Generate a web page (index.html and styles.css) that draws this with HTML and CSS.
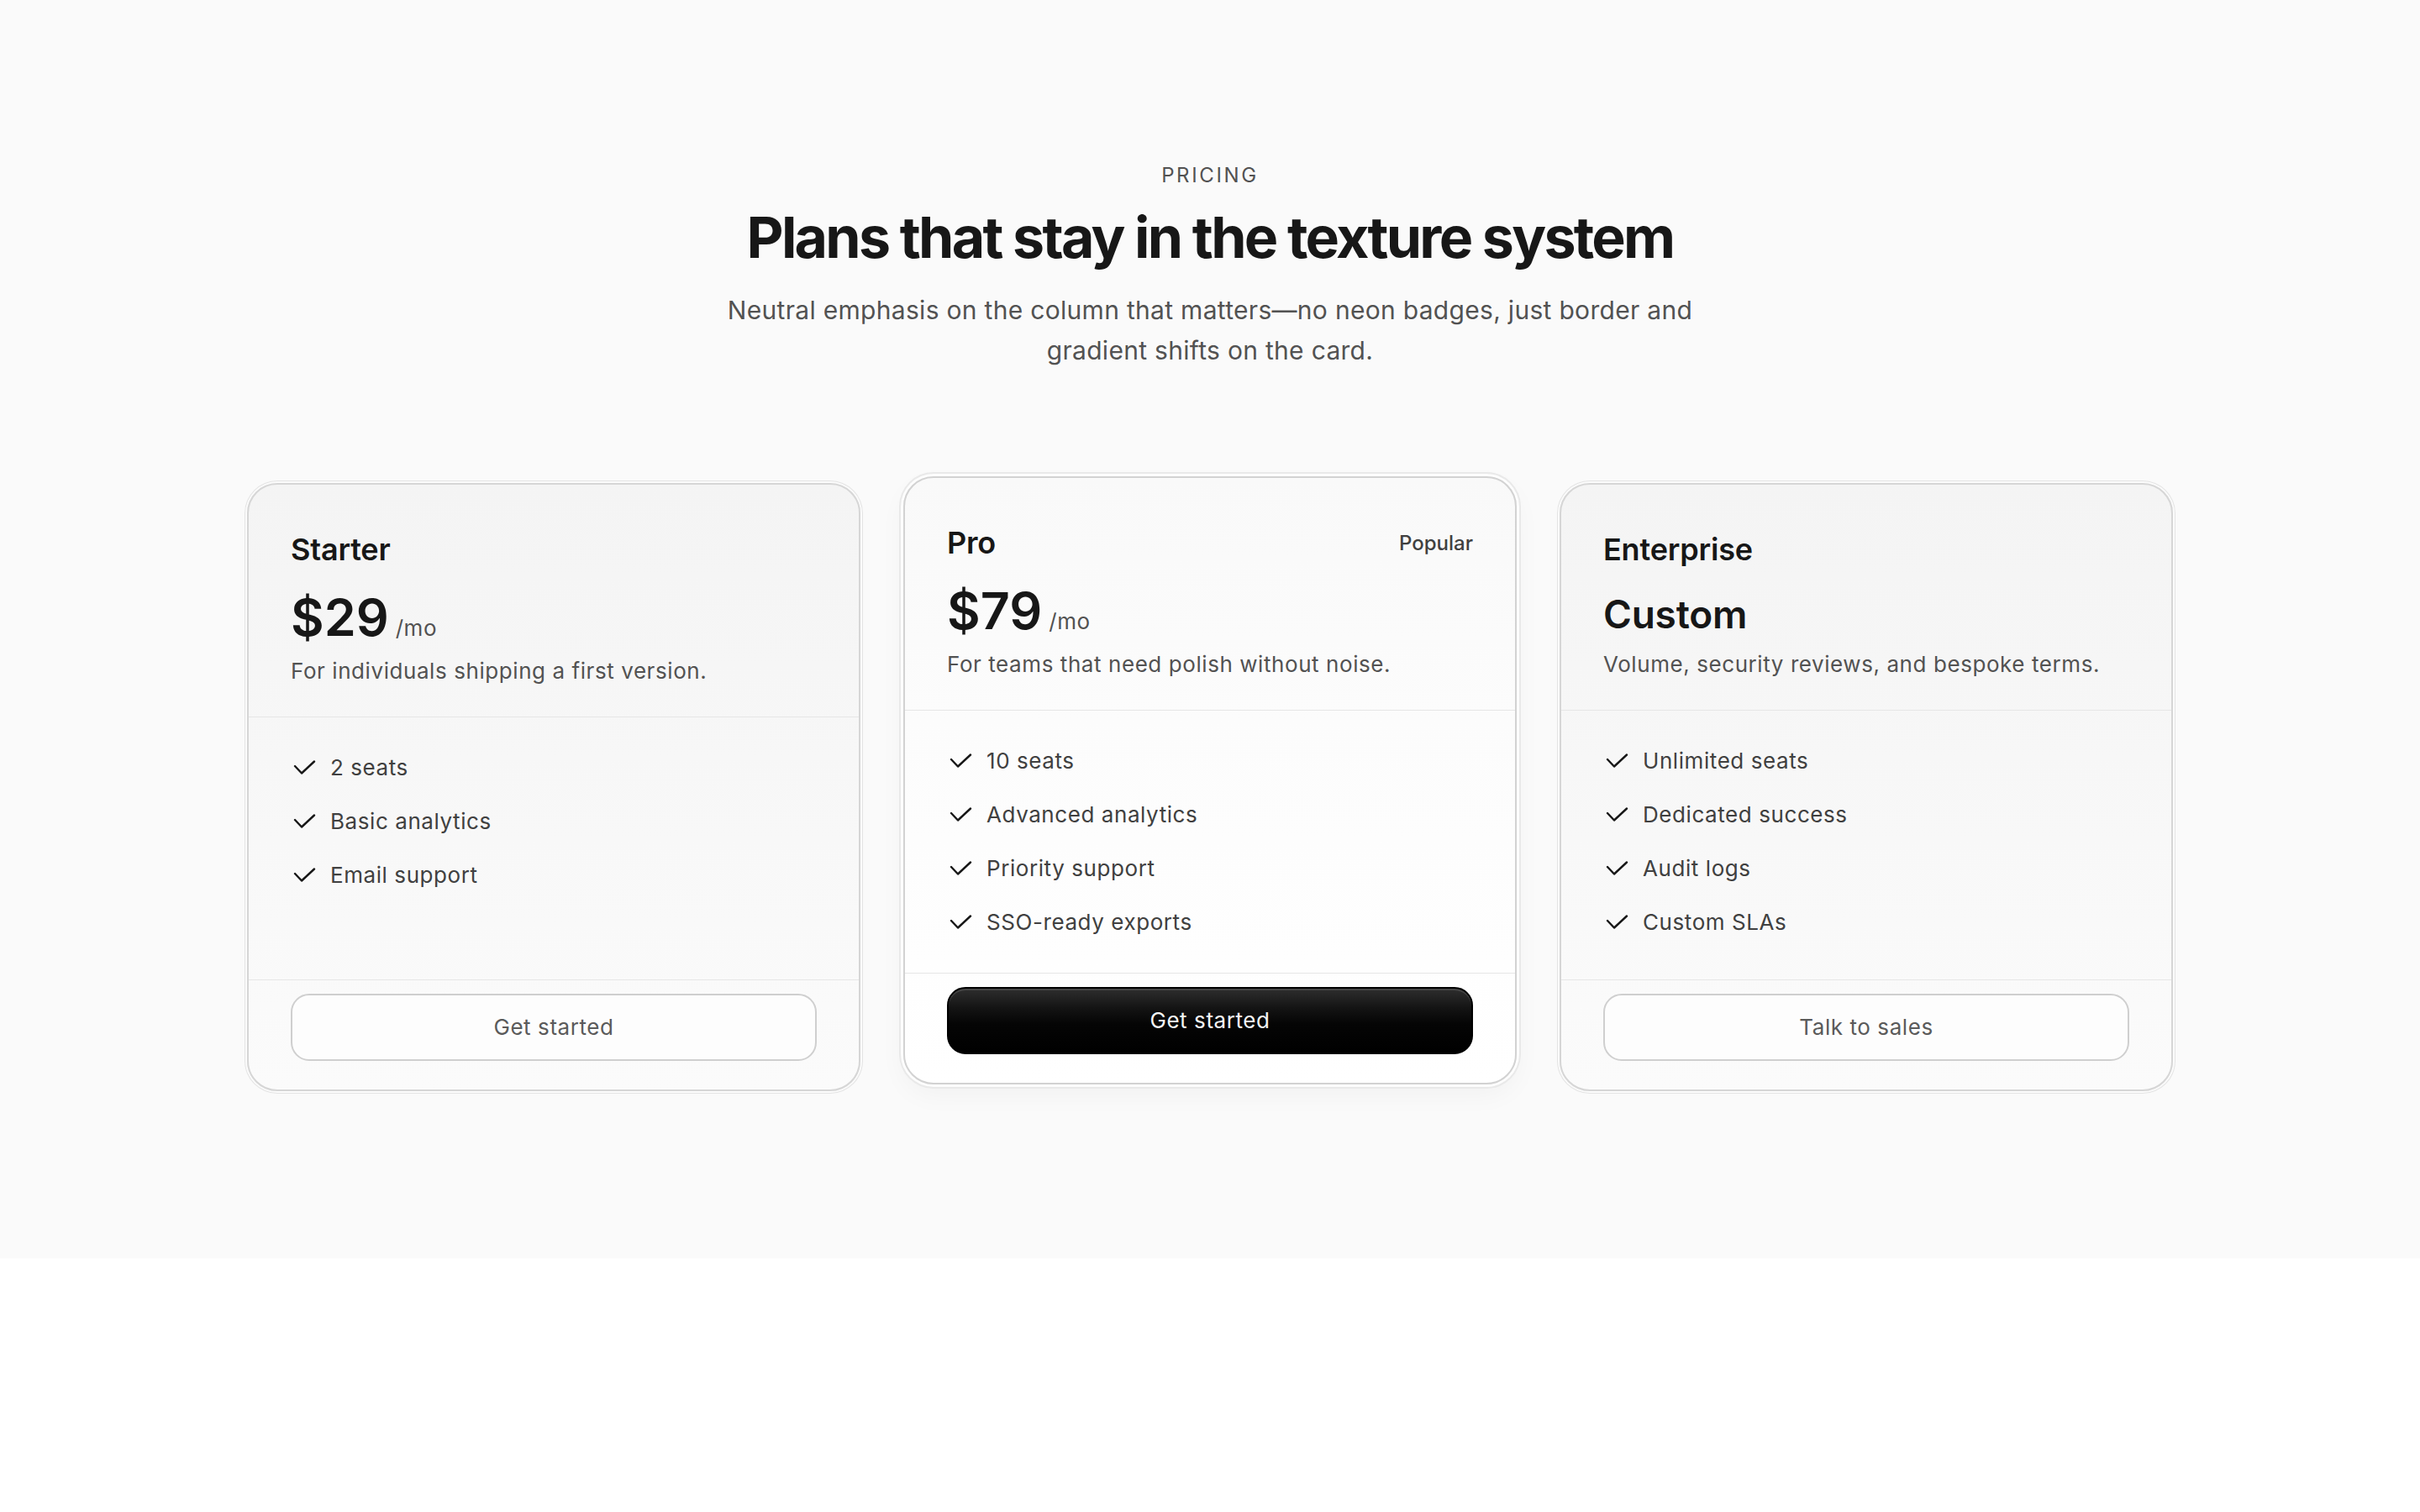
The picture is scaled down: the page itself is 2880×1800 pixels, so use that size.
FILE: index.html
```html
<!DOCTYPE html>
<html lang="en">
<head>
<meta charset="utf-8">
<title>Pricing</title>
<link rel="stylesheet" href="styles.css">
</head>
<body>
<section class="pricing">
  <header class="intro">
    <p class="eyebrow">Pricing</p>
    <h1 class="title">Plans that stay in the texture system</h1>
    <p class="lede">Neutral emphasis on the column that matters—no neon badges, just border and gradient shifts on the card.</p>
  </header>

  <div class="plans">
    <article class="card">
      <div class="card-head">
        <div class="name-row"><h2 class="plan-name">Starter</h2></div>
        <div class="price-row"><span class="price">$29</span><span class="per">/mo</span></div>
        <p class="plan-desc">For individuals shipping a first version.</p>
      </div>
      <ul class="features">
        <li class="feature"><svg class="check" viewBox="0 0 28 18" aria-hidden="true"><polyline points="3,7 11,15.5 26,1.5"/></svg><span>2 seats</span></li>
        <li class="feature"><svg class="check" viewBox="0 0 28 18" aria-hidden="true"><polyline points="3,7 11,15.5 26,1.5"/></svg><span>Basic analytics</span></li>
        <li class="feature"><svg class="check" viewBox="0 0 28 18" aria-hidden="true"><polyline points="3,7 11,15.5 26,1.5"/></svg><span>Email support</span></li>
      </ul>
      <div class="card-foot"><button class="btn btn-outline">Get started</button></div>
    </article>

    <article class="card card-featured">
      <div class="card-head">
        <div class="name-row"><h2 class="plan-name">Pro</h2><span class="badge">Popular</span></div>
        <div class="price-row"><span class="price">$79</span><span class="per">/mo</span></div>
        <p class="plan-desc">For teams that need polish without noise.</p>
      </div>
      <ul class="features">
        <li class="feature"><svg class="check" viewBox="0 0 28 18" aria-hidden="true"><polyline points="3,7 11,15.5 26,1.5"/></svg><span>10 seats</span></li>
        <li class="feature"><svg class="check" viewBox="0 0 28 18" aria-hidden="true"><polyline points="3,7 11,15.5 26,1.5"/></svg><span>Advanced analytics</span></li>
        <li class="feature"><svg class="check" viewBox="0 0 28 18" aria-hidden="true"><polyline points="3,7 11,15.5 26,1.5"/></svg><span>Priority support</span></li>
        <li class="feature"><svg class="check" viewBox="0 0 28 18" aria-hidden="true"><polyline points="3,7 11,15.5 26,1.5"/></svg><span>SSO-ready exports</span></li>
      </ul>
      <div class="card-foot"><button class="btn btn-solid">Get started</button></div>
    </article>

    <article class="card">
      <div class="card-head">
        <div class="name-row"><h2 class="plan-name">Enterprise</h2></div>
        <div class="price-row price-row-custom"><span class="price-custom">Custom</span></div>
        <p class="plan-desc">Volume, security reviews, and bespoke terms.</p>
      </div>
      <ul class="features">
        <li class="feature"><svg class="check" viewBox="0 0 28 18" aria-hidden="true"><polyline points="3,7 11,15.5 26,1.5"/></svg><span>Unlimited seats</span></li>
        <li class="feature"><svg class="check" viewBox="0 0 28 18" aria-hidden="true"><polyline points="3,7 11,15.5 26,1.5"/></svg><span>Dedicated success</span></li>
        <li class="feature"><svg class="check" viewBox="0 0 28 18" aria-hidden="true"><polyline points="3,7 11,15.5 26,1.5"/></svg><span>Audit logs</span></li>
        <li class="feature"><svg class="check" viewBox="0 0 28 18" aria-hidden="true"><polyline points="3,7 11,15.5 26,1.5"/></svg><span>Custom SLAs</span></li>
      </ul>
      <div class="card-foot"><button class="btn btn-outline">Talk to sales</button></div>
    </article>
  </div>
</section>
</body>
</html>
```

FILE: styles.css
```css
* { box-sizing: border-box; }

html, body {
  margin: 0;
  padding: 0;
  background: #ffffff;
}

body {
  font-family: Inter, "Noto Sans", "Liberation Sans", sans-serif;
  color: #171717;
  -webkit-font-smoothing: antialiased;
}

.pricing {
  background: #fafafa;
  padding: 191px 0 199px;
  display: flex;
  flex-direction: column;
  align-items: center;
}

.intro {
  display: flex;
  flex-direction: column;
  align-items: center;
  text-align: center;
  margin-bottom: 134px;
}

.eyebrow {
  margin: 0 0 18px;
  font-size: 24px;
  line-height: 36px;
  letter-spacing: 0.11em;
  text-transform: uppercase;
  color: #525252;
  font-weight: 400;
}

.title {
  margin: 0 0 25px;
  font-size: 68px;
  line-height: 75px;
  font-weight: 700;
  letter-spacing: -0.04em;
  color: #171717;
}

.lede {
  margin: 0;
  max-width: 1240px;
  font-size: 30px;
  line-height: 48px;
  letter-spacing: 0.01em;
  color: #525252;
}

.plans {
  width: 2292px;
  display: grid;
  grid-template-columns: repeat(3, 1fr);
  gap: 51px;
  align-items: stretch;
}

.card {
  display: flex;
  flex-direction: column;
  border: 2px solid #d6d6d6;
  border-radius: 36px;
  background: linear-gradient(180deg, #f4f4f4 0%, #f7f7f7 45%, #fbfbfb 100%);
  box-shadow: 0 0 0 2px #fbfbfb, 0 0 0 3px #e4e4e4;
}

.card-featured {
  transform: translateY(-8px);
  border-color: #d2d2d2;
  background: linear-gradient(180deg, #f9f9f9 0%, #fcfcfc 40%, #ffffff 100%);
  box-shadow: 0 0 0 3px #fdfdfd, 0 0 0 5px #e9e9e9, 0 12px 32px rgba(0, 0, 0, 0.04);
}

.card-head {
  padding: 54px 50px 35px;
  border-bottom: 1px solid #e6e6e6;
}

.name-row {
  display: flex;
  align-items: center;
  justify-content: space-between;
  margin-bottom: 27px;
}

.plan-name {
  margin: 0;
  font-size: 36px;
  line-height: 47px;
  font-weight: 600;
  letter-spacing: -0.005em;
  color: #171717;
}

.badge {
  font-size: 24px;
  line-height: 30px;
  font-weight: 500;
  color: #404040;
}

.price-row {
  display: flex;
  align-items: baseline;
  gap: 8px;
  height: 60px;
  margin-bottom: 14px;
}

.price {
  font-size: 61px;
  line-height: 60px;
  font-weight: 600;
  letter-spacing: 0;
  color: #171717;
}

.per {
  font-size: 26px;
  line-height: 26px;
  letter-spacing: 0.02em;
  color: #525252;
}

.price-row-custom {
  height: 52px;
}

.price-custom {
  font-size: 46px;
  line-height: 52px;
  font-weight: 600;
  letter-spacing: -0.005em;
  color: #171717;
}

.plan-desc {
  margin: 0;
  font-size: 26px;
  line-height: 39px;
  letter-spacing: 0.022em;
  color: #525252;
}

.features {
  list-style: none;
  margin: 0;
  padding: 40px 50px;
  flex: 1;
  display: flex;
  flex-direction: column;
  gap: 24px;
}

.feature {
  display: flex;
  align-items: center;
  gap: 17px;
  height: 40px;
  font-size: 26px;
  line-height: 40px;
  letter-spacing: 0.022em;
  color: #404040;
}

.check {
  width: 28px;
  height: 18px;
  margin-left: 2px;
  flex: none;
  fill: none;
  stroke: #171717;
  stroke-width: 2.4;
  stroke-linecap: round;
  stroke-linejoin: round;
}

.card-foot {
  border-top: 1px solid #e6e6e6;
  padding: 16px 50px 34px;
}

.btn {
  display: block;
  width: 100%;
  height: 80px;
  border-radius: 22px;
  font-family: inherit;
  font-size: 26px;
  line-height: 1;
  letter-spacing: 0.022em;
  cursor: pointer;
}

.btn-outline {
  background: #fdfdfd;
  border: 2px solid #cfcfcf;
  color: #5a5a5a;
}

.btn-solid {
  background: linear-gradient(180deg, #2e2e2e 0%, #141414 30%, #050505 55%, #000000 100%);
  border: 2px solid #000000;
  color: #f5f5f5;
  box-shadow: inset 0 2px 0 rgba(255, 255, 255, 0.12);
}
```
